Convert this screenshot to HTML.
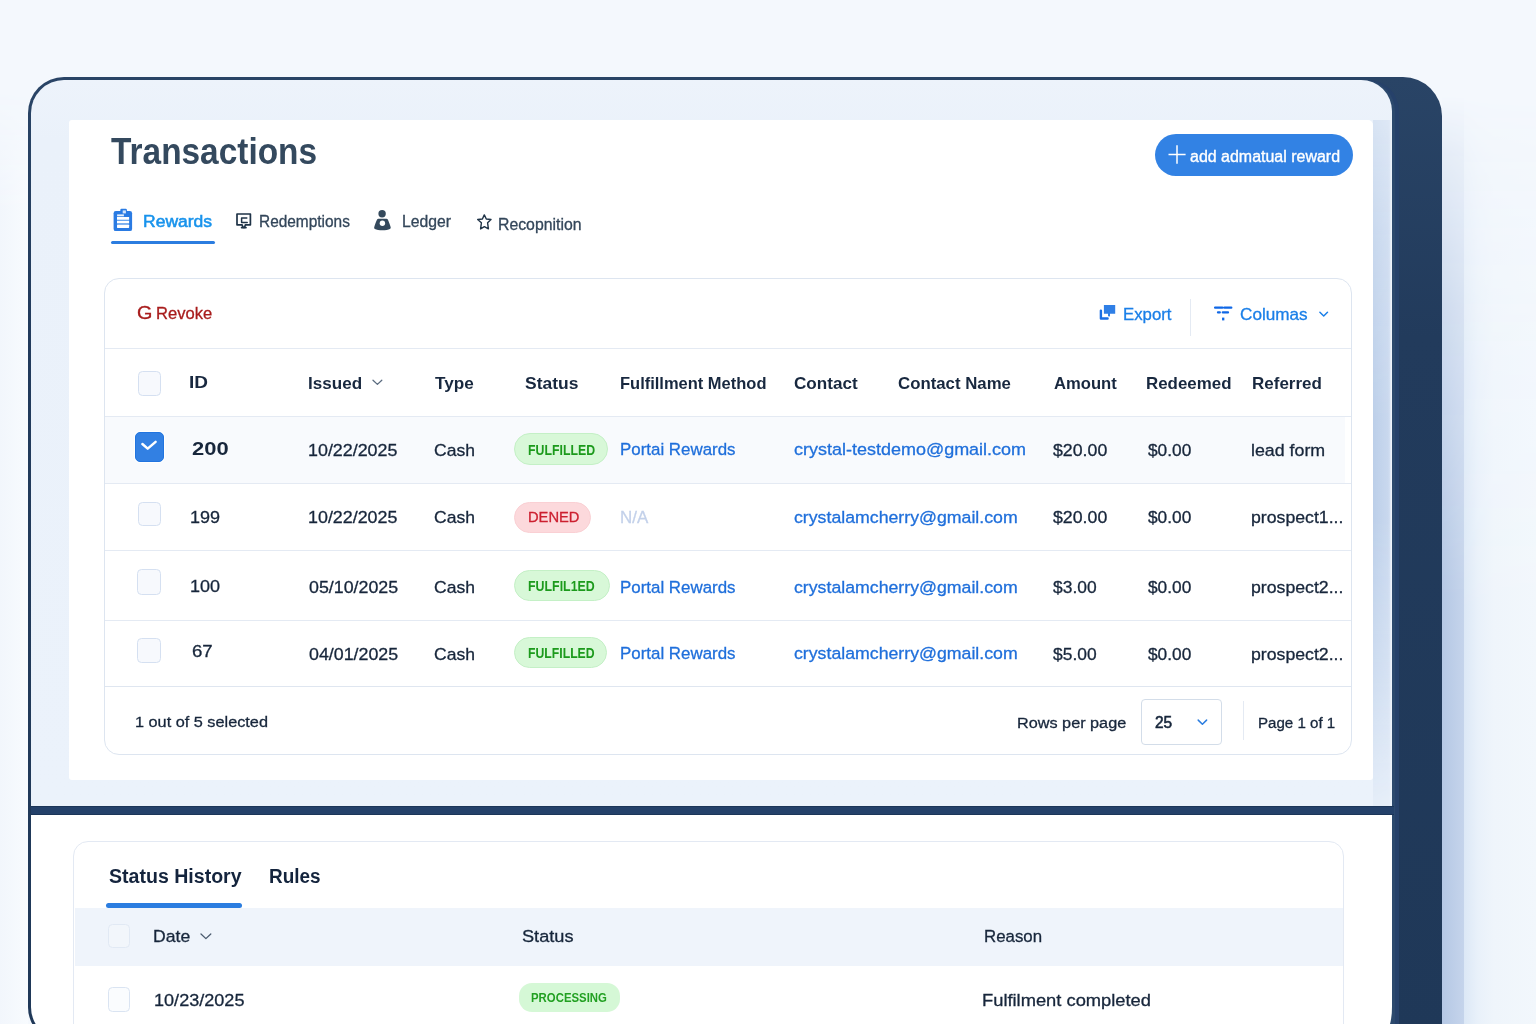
<!DOCTYPE html>
<html lang="en">
<head>
<meta charset="utf-8">
<title>Transactions</title>
<style>
html,body{margin:0;padding:0;}
body{width:1536px;height:1024px;overflow:hidden;position:relative;background:#f4f8fd;font-family:"Liberation Sans",Arial,sans-serif;}
.abs,.t,.cb,.ln{position:absolute;}
.t{white-space:pre;line-height:1;transform-origin:0 0;}
.bgfx{left:1464px;top:96px;width:72px;height:930px;background:linear-gradient(90deg,#dce8f6 0,#e9f1fa 14px,#eff5fb 30px,#f2f7fc 72px);-webkit-mask-image:linear-gradient(180deg,transparent 0,rgba(0,0,0,.3) 80px,rgba(0,0,0,.7) 260px,#000 520px);mask-image:linear-gradient(180deg,transparent 0,rgba(0,0,0,.3) 80px,rgba(0,0,0,.7) 260px,#000 520px);}
.bgtop{left:0;top:90px;width:28px;height:934px;background:linear-gradient(90deg,#f2f6fc 0,#f8fbfe 100%);-webkit-mask-image:linear-gradient(180deg,transparent 0,#000 120px);mask-image:linear-gradient(180deg,transparent 0,#000 120px);}
.shadow1{left:1442px;top:96px;width:22px;height:930px;background:linear-gradient(90deg,#b5c8e5,#c5d4eb);-webkit-mask-image:linear-gradient(180deg,transparent 0,rgba(0,0,0,.25) 60px,rgba(0,0,0,.6) 210px,#000 500px);mask-image:linear-gradient(180deg,transparent 0,rgba(0,0,0,.25) 60px,rgba(0,0,0,.6) 210px,#000 500px);}
.device{left:28px;top:77px;width:1414px;height:966px;background:linear-gradient(180deg,#294466 0,#223b5c 260px,#1f3858 100%);border-radius:36px 39px 0 36px;}
.bevel{left:38.5px;top:80px;width:1360px;height:980px;background:#26416a;border-radius:33px 31px 0 0;}
.bevel2{left:35px;top:80px;width:1360px;height:980px;background:#2c496d;border-radius:33px 31px 0 0;}
.scr1{left:30.6px;top:79.6px;width:1361.4px;height:726.4px;background:linear-gradient(180deg,#edf3fb 0,#eaf1fa 60px,#ebf2fb 100%);border-radius:33px 31px 0 0;}
.bar{left:30.6px;top:806px;width:1363px;height:9px;background:#24416a;border-top:1px solid #1b3558;border-bottom:1px solid #1b3558;box-sizing:border-box;}
.scr2{left:30.6px;top:815px;width:1361.4px;height:225.4px;background:#fff;border-radius:0 0 14px 33px / 0 0 33px 33px;}
.card1{left:69px;top:120px;width:1304px;height:659.5px;background:#fff;border-radius:3px 5px 3px 3px;}
.strip{left:1373px;top:120px;width:19px;height:686px;background:linear-gradient(90deg,#bccfe9 0,#c9d8ee 80%,#d4e0f2 90%,#eef3fb 94%,#eef3fb 100%);-webkit-mask-image:linear-gradient(180deg,rgba(0,0,0,.4) 0,rgba(0,0,0,.75) 120px,#000 300px,#000 400px,rgba(0,0,0,.6) 560px,rgba(0,0,0,.15) 680px);mask-image:linear-gradient(180deg,rgba(0,0,0,.4) 0,rgba(0,0,0,.75) 120px,#000 300px,#000 400px,rgba(0,0,0,.6) 560px,rgba(0,0,0,.15) 680px);}
.tbl{left:104px;top:278px;width:1247.5px;height:477px;border:1px solid #dde5f0;border-radius:15px;box-sizing:border-box;background:#fff;}
.ln{background:#e4eaf3;height:1px;}
.row1{left:105px;top:417px;width:1239.5px;height:66px;background:#f8fafd;}
.cb{box-sizing:border-box;border:1.5px solid #d5e0f1;background:#f7f9fd;border-radius:4.5px;}
.cbx{box-sizing:border-box;background:#3280e3;border:1px solid #2174df;border-radius:5px;box-shadow:0 0 0 1px #fff;}
.badge{box-sizing:border-box;border-radius:17px;}
.g{background:#d8f8d8;border:1px solid #c4f0c6;}
.r{background:#fcd9dc;border:1px solid #fad0d4;}
.btn{left:1155px;top:134px;width:197.5px;height:41.5px;border-radius:21px;background:#3282e4;}
.card2{left:73px;top:840.6px;width:1270.8px;height:230px;border:1px solid #e3e9f3;border-radius:15px;box-sizing:border-box;background:#fff;}
.hband{left:75px;top:908px;width:1267.5px;height:58px;background:#eff4fb;}
.sel{left:1141px;top:698.5px;width:81px;height:46px;box-sizing:border-box;border:1px solid #d3dde9;border-radius:4px;background:#fff;}
svg{position:absolute;overflow:visible;}
</style>
</head>
<body>
<div class="abs bgfx"></div>
<div class="abs bgtop"></div>
<div class="abs shadow1"></div>
<div class="abs device"></div>
<div class="abs bevel"></div>
<div class="abs bevel2"></div>
<div class="abs scr1"></div>
<div class="abs bar"></div>
<div class="abs scr2"></div>

<!-- main card -->
<div class="abs strip"></div>
<div class="abs card1"></div>
<div class="abs btn"></div>
<svg style="left:1168px;top:145px" width="18" height="19" viewBox="0 0 18 19"><path d="M9 0.3V18.7M0.5 9.5H17.6" stroke="#fff" stroke-width="1.5" fill="none"/></svg>

<!-- tabs -->
<svg style="left:113px;top:208px" width="20" height="24" viewBox="0 0 20 24">
 <rect x="0.6" y="3" width="18.5" height="20.1" rx="2.2" fill="#2a7be3"/>
 <rect x="7.3" y="0.8" width="6.6" height="4" rx="1.2" fill="#2a7be3"/>
 <rect x="4" y="9" width="12.1" height="10.8" fill="#5c9dec"/>
 <rect x="4" y="9" width="12.1" height="2.7" fill="#fff"/>
 <rect x="4" y="12.9" width="12.1" height="2.3" fill="#fff"/>
 <rect x="4" y="16.7" width="12.1" height="3.2" rx="0.6" fill="#fff"/>
 <rect x="4.1" y="6.4" width="6.8" height="1.9" fill="#fff" opacity=".9"/>
 <rect x="9.7" y="2.4" width="3.2" height="3" fill="#fff" opacity=".8"/>
</svg>
<div class="abs" style="left:111px;top:240.6px;width:104.2px;height:3.2px;background:#2b7de0;border-radius:1.5px"></div>
<svg style="left:235px;top:212px" width="18" height="18" viewBox="0 0 18 18" fill="none" stroke="#1f3347" stroke-width="1.7" stroke-linejoin="round" stroke-linecap="round">
 <path d="M2 2H15.4V12.8H10.4L9.6 15.3H7.9L7.1 12.8H2Z"/>
 <path d="M6.6 15.6H11"/>
 <path d="M11.8 6H6.6V10.6H12.2" stroke-width="1.5"/>
</svg>
<svg style="left:373px;top:208px" width="20" height="24" viewBox="0 0 20 24">
 <circle cx="9.1" cy="5.7" r="3.7" fill="#34495c"/>
 <path d="M5.4 10.7H13.5Q14.4 10.7 14.8 11.6C15.8 13.8 17 16.8 17.7 19.2Q18 20.4 16.9 21C14 22.7 4.8 22.7 1.9 21Q0.8 20.4 1.2 19.2C1.9 16.8 3 13.8 4.1 11.6Q4.5 10.7 5.4 10.7Z" fill="#34495c"/>
 <circle cx="9.4" cy="15.25" r="2.7" fill="#fff"/>
</svg>
<svg style="left:476px;top:213px" width="17" height="18" viewBox="0 0 17 18" fill="none" stroke="#1f3347" stroke-width="1.4" stroke-linejoin="round">
 <path d="M8.3 1.9L10.3 6L15 6.5L11.6 9.8L12.4 15.9L8.4 13.7L4.6 15.9L5.4 9.8L1.7 6.5L6.4 6Z"/>
</svg>

<!-- table card -->
<div class="abs tbl"></div>
<div class="ln" style="left:105px;top:348px;width:1246px"></div>
<div class="ln" style="left:105px;top:416px;width:1246px"></div>
<div class="abs row1"></div>
<div class="ln" style="left:105px;top:483px;width:1246px"></div>
<div class="ln" style="left:105px;top:550px;width:1246px"></div>
<div class="ln" style="left:105px;top:619.6px;width:1246px"></div>
<div class="ln" style="left:105px;top:686px;width:1246px;background:#dfe6f0"></div>

<!-- toolbar icons -->
<svg style="left:1099px;top:304px" width="18" height="17" viewBox="0 0 18 17">
 <path d="M4.9 1H16.2V9.7H11V12.5L9 12.3V9.7H4.9Z" fill="#2f7fe6"/>
 <path d="M1.9 6.6V14.5H8.6" fill="none" stroke="#1b6fe4" stroke-width="2.4" stroke-linecap="round" stroke-linejoin="round"/>
</svg>
<div class="abs" style="left:1190.2px;top:298.5px;width:1px;height:37px;background:#e4eaf3"></div>
<svg style="left:1213px;top:305px" width="21" height="17" viewBox="0 0 21 17" fill="none" stroke="#0f67e6" stroke-width="2.3" stroke-linecap="round">
 <path d="M2.1 2.7H9.4M11.4 2.7H18.3"/>
 <path d="M5 7.4H6.8M9.8 7.4H15"/>
 <path d="M10.2 12.6V15.4" stroke-linecap="butt"/>
</svg>
<svg style="left:1319px;top:311px" width="10" height="7" viewBox="0 0 10 7" fill="none" stroke="#1a7fe8" stroke-width="1.5" stroke-linecap="round" stroke-linejoin="round"><path d="M0.9 1.3L4.7 5L8.5 1.3"/></svg>

<!-- header row -->
<div class="cb" style="left:137.5px;top:370.5px;width:23.4px;height:25px"></div>
<svg style="left:372px;top:379px" width="11" height="7" viewBox="0 0 11 7" fill="none" stroke="#5a6b7f" stroke-width="1.3" stroke-linecap="round" stroke-linejoin="round"><path d="M1 1.2L5.4 5.4L9.8 1.2"/></svg>

<!-- checkboxes -->
<div class="abs cbx" style="left:135px;top:432px;width:28.7px;height:29.7px"></div>
<svg style="left:135px;top:432px" width="29" height="30" viewBox="0 0 29 30" fill="none" stroke="#fff" stroke-width="2.5" stroke-linecap="round" stroke-linejoin="round"><path d="M7.4 12L12.7 16.6L20.6 9.9"/></svg>
<div class="cb" style="left:137.6px;top:502.2px;width:23.6px;height:24.2px"></div>
<div class="cb" style="left:137.2px;top:569.4px;width:24.2px;height:25.6px"></div>
<div class="cb" style="left:137.2px;top:638px;width:23.8px;height:24.8px"></div>

<!-- badges -->
<div class="abs badge g" style="left:514px;top:433px;width:94px;height:32.2px"></div>
<div class="abs badge r" style="left:514px;top:502px;width:77px;height:31px"></div>
<div class="abs badge g" style="left:513.7px;top:570px;width:96.2px;height:31.4px"></div>
<div class="abs badge g" style="left:513.7px;top:637px;width:93.8px;height:31.4px"></div>

<!-- footer -->
<div class="abs sel"></div>
<svg style="left:1197px;top:719px" width="11" height="7" viewBox="0 0 11 7" fill="none" stroke="#2b7de0" stroke-width="1.5" stroke-linecap="round" stroke-linejoin="round"><path d="M1.2 1.1L5.4 5.2L9.6 1.1"/></svg>
<div class="abs" style="left:1243.4px;top:701px;width:1px;height:39px;background:#e4eaf3"></div>

<!-- lower panel -->
<div class="abs card2"></div>
<div class="abs hband"></div>
<div class="abs" style="left:106.2px;top:902.6px;width:136.2px;height:5.4px;background:#2b7de0;border-radius:3px"></div>
<div class="cb" style="left:107.6px;top:924.2px;width:22px;height:23.6px;border-color:#e1e9f4;background:#f2f6fb"></div>
<svg style="left:200px;top:933px" width="12" height="7" viewBox="0 0 12 7" fill="none" stroke="#4a5a6e" stroke-width="1.3" stroke-linecap="round" stroke-linejoin="round"><path d="M1 1L5.9 5.6L10.8 1"/></svg>
<div class="cb" style="left:107.6px;top:987.3px;width:22px;height:24.4px;border-color:#dae4f2;background:#fafcfe"></div>
<div class="abs badge" style="left:519px;top:983px;width:100.5px;height:29px;border-radius:13px;background:#d5f8d6"></div>

<span class="t" style="left:110.60px;top:133.60px;font-size:36.4px;color:#34495e;font-weight:700;transform:scaleX(0.9179);">Transactions</span>
<span class="t" style="left:143.46px;top:213.70px;font-size:16.8px;color:#1893ec;-webkit-text-stroke:0.55px #1893ec;transform:scaleX(1.0431);">Rewards</span>
<span class="t" style="left:258.82px;top:213.70px;font-size:15.8px;color:#33465a;-webkit-text-stroke:0.3px #33465a;transform:scaleX(0.9761);">Redemptions</span>
<span class="t" style="left:402.00px;top:213.70px;font-size:15.8px;color:#33465a;-webkit-text-stroke:0.3px #33465a;transform:scaleX(0.9958);">Ledger</span>
<span class="t" style="left:497.70px;top:217.00px;font-size:15.8px;color:#33465a;-webkit-text-stroke:0.3px #33465a;transform:scaleX(1.0006);">Recopnition</span>
<span class="t" style="left:1190.30px;top:148.90px;font-size:16px;color:#ffffff;-webkit-text-stroke:0.35px #fff;transform:scaleX(0.9980);">add admatual reward</span>
<span class="t" style="left:136.80px;top:304.40px;font-size:18px;color:#a81c1c;-webkit-text-stroke:0.3px #a81c1c;transform:scaleX(1.1000);">G</span>
<span class="t" style="left:156.05px;top:305.10px;font-size:17.4px;color:#a81c1c;-webkit-text-stroke:0.3px #a81c1c;transform:scaleX(0.9534);">Revoke</span>
<span class="t" style="left:1122.98px;top:306.40px;font-size:16.5px;color:#1a7fe8;-webkit-text-stroke:0.3px #1a7fe8;transform:scaleX(1.0170);">Export</span>
<span class="t" style="left:1239.96px;top:306.40px;font-size:16.5px;color:#1a7fe8;-webkit-text-stroke:0.3px #1a7fe8;transform:scaleX(1.0391);">Columas</span>
<span class="t" style="left:189.45px;top:374.00px;font-size:16.5px;color:#18283f;font-weight:700;transform:scaleX(1.1509);">ID</span>
<span class="t" style="left:307.72px;top:375.00px;font-size:16.5px;color:#18283f;font-weight:700;transform:scaleX(1.0343);">Issued</span>
<span class="t" style="left:434.60px;top:375.00px;font-size:16.5px;color:#18283f;font-weight:700;transform:scaleX(1.0378);">Type</span>
<span class="t" style="left:525.10px;top:375.00px;font-size:16.5px;color:#18283f;font-weight:700;transform:scaleX(1.0588);">Status</span>
<span class="t" style="left:619.60px;top:375.00px;font-size:16.5px;color:#18283f;font-weight:700;transform:scaleX(0.9986);">Fulfillment Method</span>
<span class="t" style="left:794.10px;top:375.00px;font-size:16.5px;color:#18283f;font-weight:700;transform:scaleX(1.0363);">Contact</span>
<span class="t" style="left:898.10px;top:375.00px;font-size:16.5px;color:#18283f;font-weight:700;transform:scaleX(1.0180);">Contact Name</span>
<span class="t" style="left:1053.90px;top:375.00px;font-size:16.5px;color:#18283f;font-weight:700;transform:scaleX(1.0065);">Amount</span>
<span class="t" style="left:1145.98px;top:375.00px;font-size:16.5px;color:#18283f;font-weight:700;transform:scaleX(1.0244);">Redeemed</span>
<span class="t" style="left:1252.37px;top:375.00px;font-size:16.5px;color:#18283f;font-weight:700;transform:scaleX(1.0303);">Referred</span>
<span class="t" style="left:192.40px;top:440.40px;font-size:18px;color:#17263b;font-weight:700;transform:scaleX(1.2200);">200</span>
<span class="t" style="left:307.97px;top:441.70px;font-size:17.3px;color:#17263b;-webkit-text-stroke:0.3px #17263b;transform:scaleX(1.0341);">10/22/2025</span>
<span class="t" style="left:433.97px;top:441.70px;font-size:17px;color:#17263b;-webkit-text-stroke:0.3px #17263b;transform:scaleX(1.0316);">Cash</span>
<span class="t" style="left:527.50px;top:442.00px;font-size:15.3px;color:#1c9a1c;font-weight:700;transform:scaleX(0.8049);">FULFILLED</span>
<span class="t" style="left:620.29px;top:442.20px;font-size:16.8px;color:#1f6fdb;-webkit-text-stroke:0.3px #1f6fdb;transform:scaleX(1.0072);">Portai Rewards</span>
<span class="t" style="left:794.10px;top:442.40px;font-size:16.8px;color:#1f6fdb;-webkit-text-stroke:0.3px #1f6fdb;transform:scaleX(1.0714);">crystal-testdemo@gmail.com</span>
<span class="t" style="left:1053.40px;top:442.70px;font-size:16.8px;color:#17263b;-webkit-text-stroke:0.3px #17263b;transform:scaleX(1.0569);">$20.00</span>
<span class="t" style="left:1148.00px;top:442.70px;font-size:16.8px;color:#17263b;-webkit-text-stroke:0.3px #17263b;transform:scaleX(1.0310);">$0.00</span>
<span class="t" style="left:1250.84px;top:442.70px;font-size:16.8px;color:#17263b;-webkit-text-stroke:0.3px #17263b;transform:scaleX(1.0603);">lead form</span>
<span class="t" style="left:189.93px;top:509.50px;font-size:16.9px;color:#17263b;-webkit-text-stroke:0.3px #17263b;transform:scaleX(1.0667);">199</span>
<span class="t" style="left:307.97px;top:509.00px;font-size:17.3px;color:#17263b;-webkit-text-stroke:0.3px #17263b;transform:scaleX(1.0341);">10/22/2025</span>
<span class="t" style="left:433.97px;top:509.00px;font-size:17px;color:#17263b;-webkit-text-stroke:0.3px #17263b;transform:scaleX(1.0316);">Cash</span>
<span class="t" style="left:528.04px;top:509.40px;font-size:15.3px;color:#cc2030;-webkit-text-stroke:0.3px #cc2030;transform:scaleX(0.9615);">DENED</span>
<span class="t" style="left:620.29px;top:509.60px;font-size:16.8px;color:#c3d1ea;-webkit-text-stroke:0.3px #c3d1ea;transform:scaleX(1.0087);">N/A</span>
<span class="t" style="left:794.10px;top:509.70px;font-size:16.8px;color:#1f6fdb;-webkit-text-stroke:0.3px #1f6fdb;transform:scaleX(1.0555);">crystalamcherry@gmail.com</span>
<span class="t" style="left:1053.40px;top:510.00px;font-size:16.8px;color:#17263b;-webkit-text-stroke:0.3px #17263b;transform:scaleX(1.0569);">$20.00</span>
<span class="t" style="left:1148.00px;top:510.00px;font-size:16.8px;color:#17263b;-webkit-text-stroke:0.3px #17263b;transform:scaleX(1.0310);">$0.00</span>
<span class="t" style="left:1250.85px;top:510.00px;font-size:16.8px;color:#17263b;-webkit-text-stroke:0.3px #17263b;transform:scaleX(1.0535);">prospect1...</span>
<span class="t" style="left:189.56px;top:577.60px;font-size:17.3px;color:#17263b;-webkit-text-stroke:0.3px #17263b;transform:scaleX(1.0429);">100</span>
<span class="t" style="left:308.90px;top:579.40px;font-size:17.3px;color:#17263b;-webkit-text-stroke:0.3px #17263b;transform:scaleX(1.0302);">05/10/2025</span>
<span class="t" style="left:433.97px;top:579.40px;font-size:17px;color:#17263b;-webkit-text-stroke:0.3px #17263b;transform:scaleX(1.0316);">Cash</span>
<span class="t" style="left:527.89px;top:578.40px;font-size:15.3px;color:#1c9a1c;font-weight:700;transform:scaleX(0.8099);">FULFIL1ED</span>
<span class="t" style="left:620.29px;top:579.60px;font-size:16.8px;color:#1f6fdb;-webkit-text-stroke:0.3px #1f6fdb;transform:scaleX(1.0072);">Portal Rewards</span>
<span class="t" style="left:794.10px;top:580.10px;font-size:16.8px;color:#1f6fdb;-webkit-text-stroke:0.3px #1f6fdb;transform:scaleX(1.0555);">crystalamcherry@gmail.com</span>
<span class="t" style="left:1053.40px;top:580.40px;font-size:16.8px;color:#17263b;-webkit-text-stroke:0.3px #17263b;transform:scaleX(1.0381);">$3.00</span>
<span class="t" style="left:1148.00px;top:580.40px;font-size:16.8px;color:#17263b;-webkit-text-stroke:0.3px #17263b;transform:scaleX(1.0310);">$0.00</span>
<span class="t" style="left:1250.85px;top:580.40px;font-size:16.8px;color:#17263b;-webkit-text-stroke:0.3px #17263b;transform:scaleX(1.0535);">prospect2...</span>
<span class="t" style="left:191.92px;top:643.10px;font-size:17.3px;color:#17263b;-webkit-text-stroke:0.3px #17263b;transform:scaleX(1.0778);">67</span>
<span class="t" style="left:308.90px;top:645.60px;font-size:17.3px;color:#17263b;-webkit-text-stroke:0.3px #17263b;transform:scaleX(1.0302);">04/01/2025</span>
<span class="t" style="left:433.97px;top:645.60px;font-size:17px;color:#17263b;-webkit-text-stroke:0.3px #17263b;transform:scaleX(1.0316);">Cash</span>
<span class="t" style="left:527.90px;top:645.40px;font-size:15.3px;color:#1c9a1c;font-weight:700;transform:scaleX(0.8000);">FULFILLED</span>
<span class="t" style="left:620.29px;top:646.20px;font-size:16.8px;color:#1f6fdb;-webkit-text-stroke:0.3px #1f6fdb;transform:scaleX(1.0072);">Portal Rewards</span>
<span class="t" style="left:794.10px;top:646.30px;font-size:16.8px;color:#1f6fdb;-webkit-text-stroke:0.3px #1f6fdb;transform:scaleX(1.0555);">crystalamcherry@gmail.com</span>
<span class="t" style="left:1053.40px;top:646.60px;font-size:16.8px;color:#17263b;-webkit-text-stroke:0.3px #17263b;transform:scaleX(1.0381);">$5.00</span>
<span class="t" style="left:1148.00px;top:646.60px;font-size:16.8px;color:#17263b;-webkit-text-stroke:0.3px #17263b;transform:scaleX(1.0310);">$0.00</span>
<span class="t" style="left:1250.85px;top:646.60px;font-size:16.8px;color:#17263b;-webkit-text-stroke:0.3px #17263b;transform:scaleX(1.0535);">prospect2...</span>
<span class="t" style="left:134.95px;top:714.10px;font-size:15.5px;color:#17263b;-webkit-text-stroke:0.3px #17263b;transform:scaleX(1.0496);">1 out of 5 selected</span>
<span class="t" style="left:1016.75px;top:715.30px;font-size:15.5px;color:#17263b;-webkit-text-stroke:0.3px #17263b;transform:scaleX(1.0476);">Rows per page</span>
<span class="t" style="left:1155.20px;top:715.30px;font-size:15.8px;color:#17263b;-webkit-text-stroke:0.6px #17263b;transform:scaleX(0.9778);">25</span>
<span class="t" style="left:1257.73px;top:715.30px;font-size:15.5px;color:#17263b;-webkit-text-stroke:0.3px #17263b;transform:scaleX(0.9744);">Page 1 of 1</span>
<span class="t" style="left:109.00px;top:866.20px;font-size:20px;color:#14243d;font-weight:700;transform:scaleX(0.9779);">Status History</span>
<span class="t" style="left:269.35px;top:866.20px;font-size:20px;color:#14243d;font-weight:700;transform:scaleX(0.9472);">Rules</span>
<span class="t" style="left:153.45px;top:928.60px;font-size:16.8px;color:#17263b;-webkit-text-stroke:0.3px #17263b;transform:scaleX(1.0500);">Date</span>
<span class="t" style="left:522.12px;top:929.00px;font-size:16.8px;color:#17263b;-webkit-text-stroke:0.3px #17263b;transform:scaleX(1.0826);">Status</span>
<span class="t" style="left:984.40px;top:929.00px;font-size:16.8px;color:#17263b;-webkit-text-stroke:0.3px #17263b;transform:scaleX(1.0036);">Reason</span>
<span class="t" style="left:153.95px;top:992.20px;font-size:17.3px;color:#17263b;-webkit-text-stroke:0.3px #17263b;transform:scaleX(1.0459);">10/23/2025</span>
<span class="t" style="left:531.15px;top:991.00px;font-size:13.4px;color:#22a022;font-weight:700;transform:scaleX(0.8500);">PROCESSING</span>
<span class="t" style="left:982.31px;top:993.40px;font-size:16.8px;color:#17263b;-webkit-text-stroke:0.3px #17263b;transform:scaleX(1.0915);">Fulfilment completed</span>
</body>
</html>
